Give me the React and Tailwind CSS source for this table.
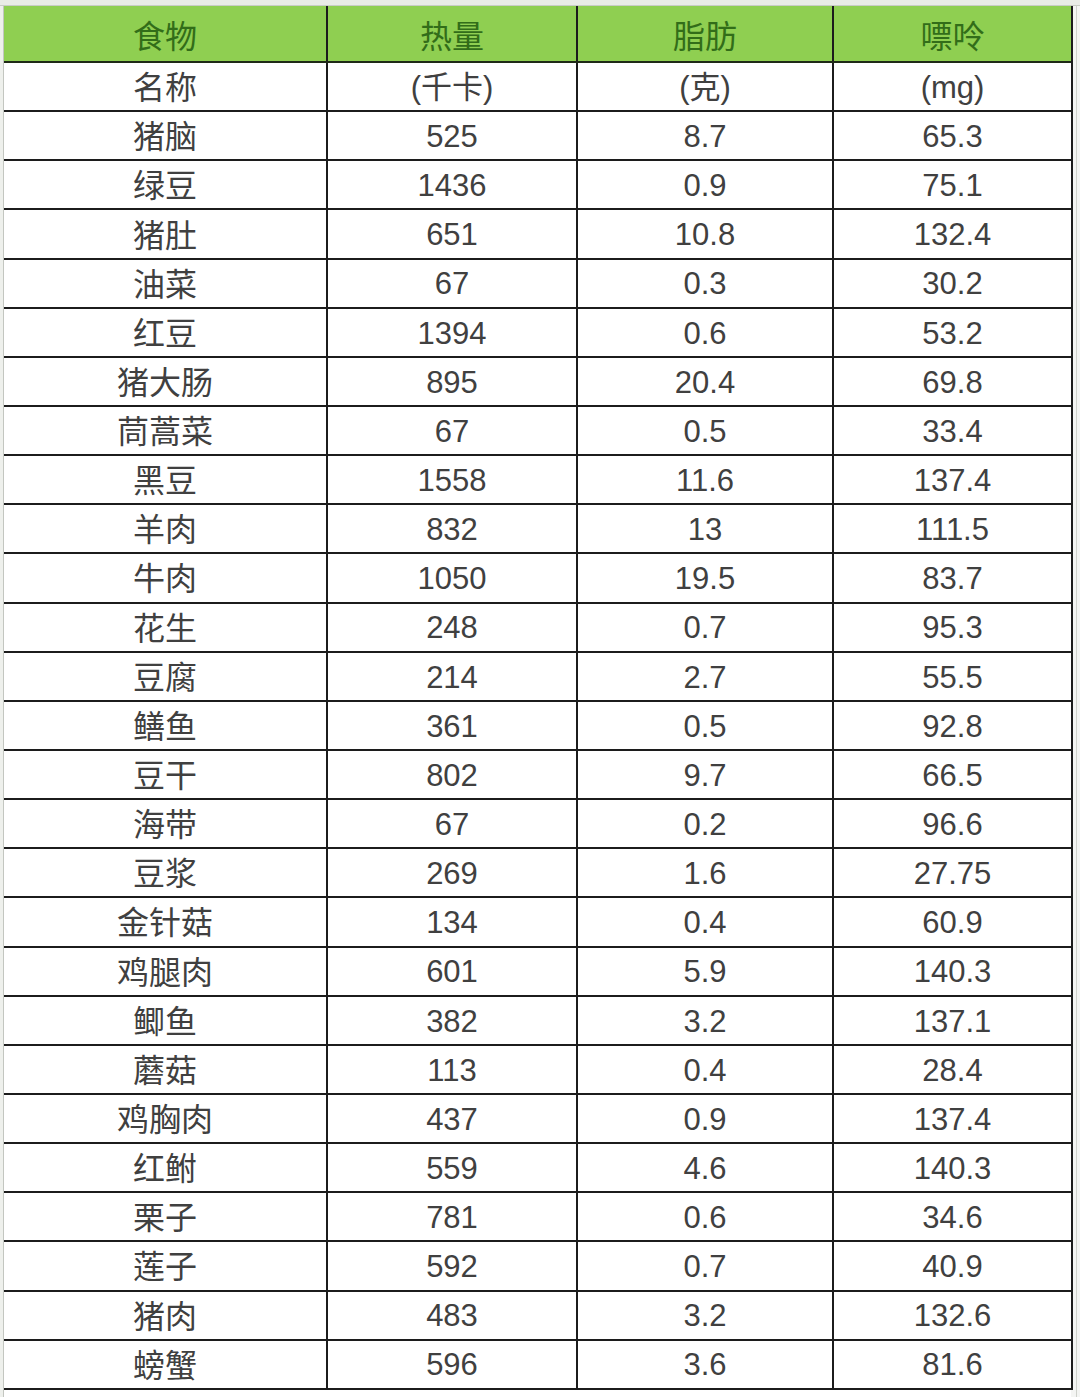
const rows = [
  ["名称", "(千卡)", "(克)", "(mg)"],
  ["猪脑", "525", "8.7", "65.3"],
  ["绿豆", "1436", "0.9", "75.1"],
  ["猪肚", "651", "10.8", "132.4"],
  ["油菜", "67", "0.3", "30.2"],
  ["红豆", "1394", "0.6", "53.2"],
  ["猪大肠", "895", "20.4", "69.8"],
  ["茼蒿菜", "67", "0.5", "33.4"],
  ["黑豆", "1558", "11.6", "137.4"],
  ["羊肉", "832", "13", "111.5"],
  ["牛肉", "1050", "19.5", "83.7"],
  ["花生", "248", "0.7", "95.3"],
  ["豆腐", "214", "2.7", "55.5"],
  ["鳝鱼", "361", "0.5", "92.8"],
  ["豆干", "802", "9.7", "66.5"],
  ["海带", "67", "0.2", "96.6"],
  ["豆浆", "269", "1.6", "27.75"],
  ["金针菇", "134", "0.4", "60.9"],
  ["鸡腿肉", "601", "5.9", "140.3"],
  ["鲫鱼", "382", "3.2", "137.1"],
  ["蘑菇", "113", "0.4", "28.4"],
  ["鸡胸肉", "437", "0.9", "137.4"],
  ["红鲋", "559", "4.6", "140.3"],
  ["栗子", "781", "0.6", "34.6"],
  ["莲子", "592", "0.7", "40.9"],
  ["猪肉", "483", "3.2", "132.6"],
  ["螃蟹", "596", "3.6", "81.6"],
];

const widths = ["w-[322px]", "w-[250px]", "w-[256px]", "w-[239px]"];
const font = { fontFamily: '"Liberation Sans", "Noto Sans CJK SC", sans-serif' };

export default function App() {
  return (
    <div className="w-[1080px] h-[1397px] bg-[#f4f5f3] overflow-hidden" style={font}>
      <div className="h-[6px] bg-[#e9ece6] border-b border-[#c9cdc5]" />
      <div className="flex">
        <div className="w-[4px] shrink-0 bg-[#eef0ec] border-r border-[#c3c6c0]" />
        <div className="bg-white">
          {/* header */}
          <div className="flex h-[57px] bg-[#8fcf51] border-b-2 border-[#1f2a17]">
            {["食物", "热量", "脂肪", "嘌呤"].map((t, i) => (
              <div
                key={i}
                className={`${widths[i]} flex items-center justify-center pt-[6px] text-[32px] text-[#326d19] ${i > 0 ? "border-l-2 border-[#1c1c1c]" : ""}`}
              >
                {t}
              </div>
            ))}
          </div>
          {rows.map((r, ri) => (
            <div key={ri} className="flex h-[49.15px] border-b-2 border-[#1c1c1c]">
              {r.map((c, i) => (
                <div
                  key={i}
                  className={`${widths[i]} flex items-center justify-center pt-[3px] text-[#404040] ${i === 0 ? "text-[32px]" : "text-[31px]"} ${i > 0 ? "border-l-2 border-[#1c1c1c]" : ""}`}
                >
                  {c}
                </div>
              ))}
            </div>
          ))}
        </div>
        <div className="w-[2px] bg-[#1c1c1c] shrink-0 h-[1384px]" />
        <div className="w-[3px]" />
        <div className="w-px bg-[#cfd2cc] h-[1397px]" />
      </div>
    </div>
  );
}
